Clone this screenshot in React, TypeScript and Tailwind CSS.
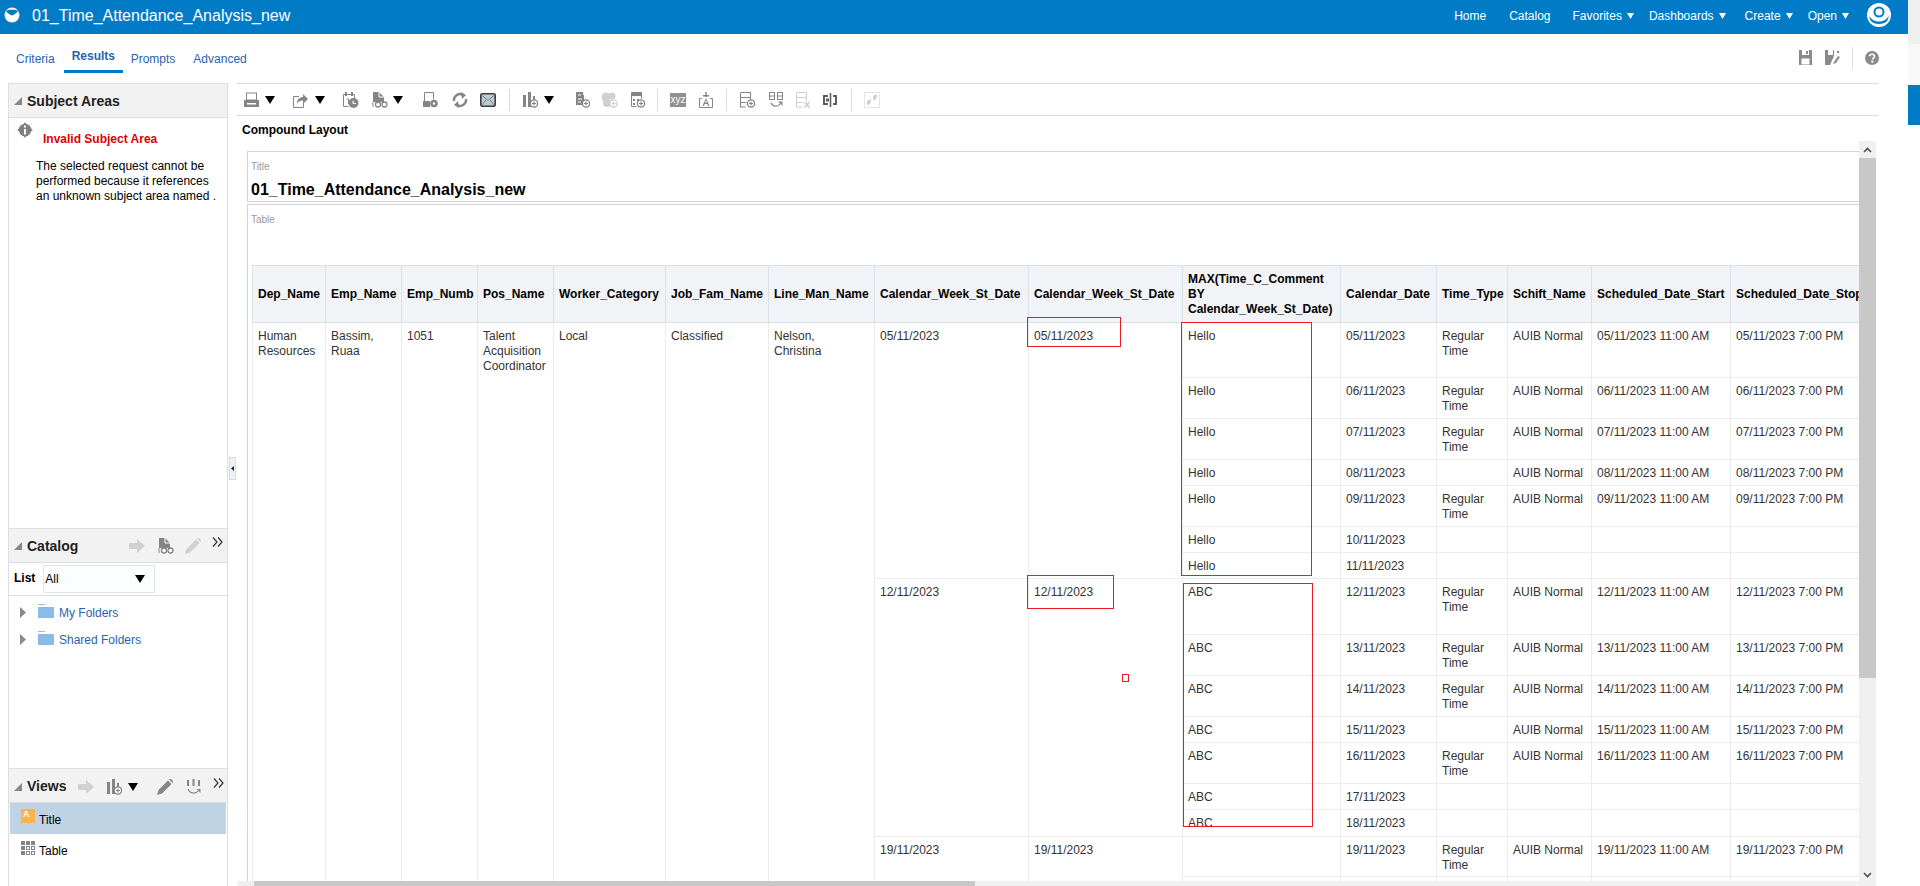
import type { ReactNode } from 'react';

const G = '#858585';
const L = '#d0d0d0';

function Ico({ children, w = 16, h = 16, className = '' }: { children: ReactNode; w?: number; h?: number; className?: string }) {
  return (
    <svg width={w} height={h} viewBox={`0 0 ${w} ${h}`} className={`shrink-0 ${className}`}>
      {children}
    </svg>
  );
}

function Caret({ className = '' }: { className?: string }) {
  return (
    <svg width="10" height="8" viewBox="0 0 10 8" className={`shrink-0 ${className}`}>
      <path d="M0 0h10L5 8z" fill="#000" />
    </svg>
  );
}

function NavCaret() {
  return (
    <svg width="7" height="6" viewBox="0 0 7 6" className="ml-[5px] shrink-0">
      <path d="M0 0h7L3.5 6z" fill="#fff" />
    </svg>
  );
}

function Plus({ x, y, c = G }: { x: number; y: number; c?: string }) {
  return (
    <g>
      <circle cx={x} cy={y} r="3.6" fill="#fff" stroke={c} strokeWidth="1.3" />
      <path d={`M${x - 2} ${y}h4M${x} ${y - 2}v4`} stroke={c} strokeWidth="1.2" />
    </g>
  );
}

function PrintIcon() {
  return (
    <Ico w={17}>
      <rect x="3.5" y="1" width="10" height="7" fill="none" stroke={G} />
      <path d="M1 8h15a1 1 0 0 1 0 1v6H1z" fill={G} />
      <rect x="4" y="11" width="9" height="1.5" fill="#fff" />
    </Ico>
  );
}

function ShareIcon() {
  return (
    <Ico>
      <path d="M7 4.5H1.5v11h10V11" fill="none" stroke={G} />
      <path d="M5 12c0-5 3-7 6-7V2l5 5-5 5V8.500c-3 0-5 1-6 3.500z" fill={G} />
    </Ico>
  );
}

function CalendarIcon() {
  return (
    <Ico w={17}>
      <path d="M1.500 2.500h11v8M1.500 2.500v12h5" fill="none" stroke={G} />
      <path d="M3 0h2v4H3zM9 0h2v4H9z" fill={G} />
      <path d="M4.500 7h2v5" fill="none" stroke={G} />
      <circle cx="11.500" cy="11" r="5" fill={G} />
      <path d="M11 8.500V11.500H14" fill="none" stroke="#fff" />
    </Ico>
  );
}

function DocGlassesIcon() {
  return (
    <Ico>
      <path d="M1 0h6l5 5v5H1z" fill={G} />
      <path d="M7 0v5h5" fill="none" stroke="#fff" />
      <path d="M1 10v5" stroke={G} />
      <circle cx="6" cy="12.500" r="2.500" fill="#fff" stroke={G} strokeWidth="1.300" />
      <circle cx="12.500" cy="12.500" r="2.500" fill="#fff" stroke={G} strokeWidth="1.300" />
    </Ico>
  );
}

function DocGearIcon() {
  return (
    <Ico w={15}>
      <path d="M1.500 9V.5h9v7" fill="none" stroke={G} />
      <path d="M0 9h7v6H0z" fill={G} />
      <circle cx="11" cy="11.500" r="3.800" fill={G} />
      <circle cx="11" cy="11.500" r="1.300" fill="#fff" />
    </Ico>
  );
}

function RefreshIcon() {
  return (
    <Ico>
      <path d="M2 9a6 6 0 0 1 9-6" fill="none" stroke={G} strokeWidth="2.400" />
      <path d="M14 7a6 6 0 0 1-9 6" fill="none" stroke={G} strokeWidth="2.400" />
      <path d="M9 0l5 3-4 4zM7 16l-5-3 4-4z" fill={G} />
    </Ico>
  );
}

function MailIcon() {
  return (
    <Ico>
      <rect x=".8" y="1.800" width="14.400" height="12.400" rx="1.500" fill="#bfcbd6" stroke="#3c3c3c" strokeWidth="1.600" />
      <path d="M2 3.500l6 5 6-5M2 13l4-5M14 13l-4-5" fill="none" stroke="#71828f" />
    </Ico>
  );
}

function BarsPlusIcon({ c = G }: { c?: string }) {
  return (
    <Ico>
      <path d="M1 3h3v12H1zM6 0h3v15H6zM11 4h2v4h-2z" fill={c} />
      <Plus x={12} y={11.500} c={c} />
    </Ico>
  );
}

function ListPlusIcon() {
  return (
    <Ico w={15}>
      <path d="M1 0h7v3h1v10H1z" fill={G} />
      <path d="M3 3h3M3 7h4M3 10h3" stroke="#fff" />
      <Plus x={11} y={11.500} />
    </Ico>
  );
}

function BlobPlusIcon() {
  return (
    <Ico w={17}>
      <circle cx="5" cy="5" r="4.500" fill={L} />
      <circle cx="11" cy="4" r="3.500" fill={L} />
      <circle cx="6" cy="11" r="4" fill={L} />
      <Plus x={12.500} y={11.500} c={L} />
    </Ico>
  );
}

function CalcPlusIcon() {
  return (
    <Ico w={15}>
      <path d="M1.500.5h10v6M1.500.5v14h5" fill="none" stroke={G} />
      <path d="M1 1h11v3H1z" fill={G} />
      <path d="M3 7h2v2H3zM7 7h2v2H7zM3 11h2v2H3z" fill={G} />
      <Plus x={11} y={11.500} />
    </Ico>
  );
}

function XyzIcon() {
  return (
    <div className="shrink-0 w-4 h-[14px] bg-[#909090] flex items-center justify-center text-white text-[10px] leading-none font-['Liberation_Sans',sans-serif]">
      xyz
    </div>
  );
}

function TextAddIcon() {
  return (
    <Ico>
      <path d="M4 6.500H1.500v9h13v-9H12" fill="none" stroke={G} />
      <path d="M8 0v5" stroke={G} strokeWidth="1.500" />
      <path d="M5 3h6v1.500H5z" fill={G} />
      <path d="M8 6l3.500 8H10l-.6-2H6.600L6 14H4.500zM7 10.500h2L8 8z" fill={G} fillRule="evenodd" />
    </Ico>
  );
}

function SectionPlusIcon() {
  return (
    <Ico>
      <path d="M1.500 1v14M1.500.5h10v5h-10M1.500 5.500v5h6M1.500 10.500v4.500h5" fill="none" stroke={G} strokeWidth="1.100" />
      <path d="M11.500 5.500v2" stroke={G} />
      <Plus x={12} y={11.500} />
    </Ico>
  );
}

function SectionSwapIcon() {
  return (
    <Ico>
      <rect x="1.500" y=".5" width="5" height="7" fill="none" stroke={G} />
      <rect x="9.500" y=".5" width="5" height="7" fill="none" stroke={G} />
      <path d="M1.500 4h5M9.500 4h5" stroke={G} />
      <path d="M3 11c2 4 7 4 9 1" fill="none" stroke={G} strokeWidth="1.300" />
      <path d="M10 9.500h4.500V14z" fill={G} />
    </Ico>
  );
}

function SectionDelIcon() {
  return (
    <Ico>
      <path d="M1.500 15V.5h10v9M1.500 5.500h10M1.500 10.500h6M1.500 15h6" fill="none" stroke={L} />
      <path d="M9.500 10l5 5.500M14.500 10l-5 5.500" stroke={L} strokeWidth="1.800" />
    </Ico>
  );
}

function ColumnSplitIcon() {
  return (
    <Ico>
      <path d="M1 3h5v2H3v6h3v2H1zM11 3h4v10h-4v-2h2V5h-2z" fill="#5f5f5f" />
      <path d="M4 6.500h3v3H4z" fill="#5f5f5f" />
      <path d="M8.500 1v14" stroke="#5f5f5f" strokeWidth="1.600" />
    </Ico>
  );
}

function StepsIcon() {
  return (
    <Ico>
      <rect x=".5" y=".5" width="15" height="15" fill="none" stroke="#e4e4e4" />
      <path d="M9 5c1-3 4-3 4-1s-2 3-2 4-2.500.5-2-3zM3 10c1-3 4-3 4-1s-2 3-2 4-2.500.5-2-3z" fill={L} />
    </Ico>
  );
}

function ArrowRightIcon({ c = L }: { c?: string }) {
  return (
    <Ico>
      <path d="M0 5h8V1l8 7-8 7v-4H0z" fill={c} />
    </Ico>
  );
}

function PencilIcon({ c = L }: { c?: string }) {
  return (
    <Ico>
      <path d="M0 16l1.500-5L11 1.500 14.500 5 5 14.500zM12 .5c1-1 2-.5 3 .5s1.500 2 .5 3z" fill={c} />
    </Ico>
  );
}

function DoubleChevron() {
  return (
    <svg width="11" height="10" viewBox="0 0 11 10" className="shrink-0">
      <path d="M1 .5L5 5 1 9.500M6 .5L10 5 6 9.500" fill="none" stroke="#333" strokeWidth="1.200" />
    </svg>
  );
}

function PanelCaret() {
  return (
    <svg width="8" height="8" viewBox="0 0 8 8" className="shrink-0">
      <path d="M8 0v8H0z" fill="#888" />
    </svg>
  );
}

function FolderRow({ label }: { label: string }) {
  return (
    <div className="flex items-center h-[27px]">
      <svg width="6" height="11" viewBox="0 0 6 11" className="ml-[11px] shrink-0">
        <path d="M0 0l6 5.500L0 11z" fill="#8a8a8a" />
      </svg>
      <svg width="16" height="14" viewBox="0 0 16 14" className="ml-3 shrink-0 -mt-[3px]">
        <path d="M0 0h7v1H0zM0 3h16v11H0z" fill="#8bbce8" />
      </svg>
      <span className="ml-[5px] text-[#2a63ac]">{label}</span>
    </div>
  );
}

const head = [
  'Dep_Name',
  'Emp_Name',
  'Emp_Numb',
  'Pos_Name',
  'Worker_Category',
  'Job_Fam_Name',
  'Line_Man_Name',
  'Calendar_Week_St_Date',
  'Calendar_Week_St_Date',
  'MAX(Time_C_Comment BY Calendar_Week_St_Date)',
  'Calendar_Date',
  'Time_Type',
  'Schift_Name',
  'Scheduled_Date_Start',
  'Scheduled_Date_Stop',
];

type Row = { h: string; week?: string; span?: number; comment: string; date: string; type: boolean; shift: boolean };

const rows: Row[] = [
  { h: 'h-[55px]', week: '05/11/2023', span: 7, comment: 'Hello', date: '05/11/2023', type: true, shift: true },
  { h: 'h-[41px]', comment: 'Hello', date: '06/11/2023', type: true, shift: true },
  { h: 'h-[41px]', comment: 'Hello', date: '07/11/2023', type: true, shift: true },
  { h: 'h-[26px]', comment: 'Hello', date: '08/11/2023', type: false, shift: true },
  { h: 'h-[41px]', comment: 'Hello', date: '09/11/2023', type: true, shift: true },
  { h: 'h-[26px]', comment: 'Hello', date: '10/11/2023', type: false, shift: false },
  { h: 'h-[26px]', comment: 'Hello', date: '11/11/2023', type: false, shift: false },
  { h: 'h-[56px]', week: '12/11/2023', span: 7, comment: 'ABC', date: '12/11/2023', type: true, shift: true },
  { h: 'h-[41px]', comment: 'ABC', date: '13/11/2023', type: true, shift: true },
  { h: 'h-[41px]', comment: 'ABC', date: '14/11/2023', type: true, shift: true },
  { h: 'h-[26px]', comment: 'ABC', date: '15/11/2023', type: false, shift: true },
  { h: 'h-[41px]', comment: 'ABC', date: '16/11/2023', type: true, shift: true },
  { h: 'h-[26px]', comment: 'ABC', date: '17/11/2023', type: false, shift: false },
  { h: 'h-[27px]', comment: 'ABC', date: '18/11/2023', type: false, shift: false },
  { h: 'h-[40px]', week: '19/11/2023', span: 2, comment: '', date: '19/11/2023', type: true, shift: true },
  { h: 'h-[41px]', comment: '', date: '20/11/2023', type: true, shift: true },
];

const td = 'border border-[#ececec] align-top px-[5px] pt-[6px] pb-[3px] text-[#333] leading-[15px]';
const th = 'border border-[#d9e1e7] bg-[#f1f3f7] px-[5px] font-bold text-black text-left leading-[15px]';

function ReportTable() {
  return (
    <table className="table-fixed border-collapse w-[1665px] text-[12px]">
      <colgroup>
        <col className="w-[73px]" />
        <col className="w-[76px]" />
        <col className="w-[76px]" />
        <col className="w-[76px]" />
        <col className="w-[112px]" />
        <col className="w-[103px]" />
        <col className="w-[106px]" />
        <col className="w-[154px]" />
        <col className="w-[154px]" />
        <col className="w-[158px]" />
        <col className="w-[96px]" />
        <col className="w-[71px]" />
        <col className="w-[84px]" />
        <col className="w-[139px]" />
        <col className="w-[187px]" />
      </colgroup>
      <thead>
        <tr className="h-[57px]">
          {head.map((h, i) => (
            <th key={i} className={th}>
              {h}
            </th>
          ))}
        </tr>
      </thead>
      <tbody>
        {rows.map((r, i) => (
          <tr key={r.date} className={r.h}>
            {i === 0 && (
              <>
                <td rowSpan={rows.length} className={td}>Human Resources</td>
                <td rowSpan={rows.length} className={td}>Bassim, Ruaa</td>
                <td rowSpan={rows.length} className={td}>1051</td>
                <td rowSpan={rows.length} className={td}>Talent Acquisition Coordinator</td>
                <td rowSpan={rows.length} className={td}>Local</td>
                <td rowSpan={rows.length} className={td}>Classified</td>
                <td rowSpan={rows.length} className={td}>Nelson,<br />Christina</td>
              </>
            )}
            {r.week && (
              <>
                <td rowSpan={r.span} className={td}>{r.week}</td>
                <td rowSpan={r.span} className={td}>{r.week}</td>
              </>
            )}
            <td className={td}>{r.comment}</td>
            <td className={td}>{r.date}</td>
            <td className={td}>{r.type ? 'Regular Time' : ''}</td>
            <td className={td}>{r.shift ? 'AUIB Normal' : ''}</td>
            <td className={td}>{r.shift ? `${r.date} 11:00 AM` : ''}</td>
            <td className={td}>{r.shift ? `${r.date} 7:00 PM` : ''}</td>
          </tr>
        ))}
      </tbody>
    </table>
  );
}

export default function App() {
  return (
    <div className="flex w-[1920px] h-[886px] overflow-hidden bg-white text-[12px] text-black font-['Liberation_Sans',Arial,sans-serif]">
      <div className="w-[1908px] flex flex-col">
        <header className="h-[34px] shrink-0 bg-[#027bc7] flex items-center text-white">
          <svg width="16" height="18" viewBox="0 0 16 18" className="ml-1 -mt-[4px] shrink-0">
            <circle cx="8" cy="9" r="7.500" fill="#fff" />
            <path d="M1.800 5c1.800 2.500 4 3.500 6.200 4.500 2.200-1 4.400-2 6.200-4.500-1.500-1-3-1.300-6.200-1.300S3.300 4 1.800 5z" fill="#027bc7" />
          </svg>
          <span className="ml-3 text-[16px] leading-none -mt-[3px]">01_Time_Attendance_Analysis_new</span>
          <nav className="ml-auto flex items-center pr-[17px] -mt-[3px]">
            <span>Home</span>
            <span className="ml-[23px]">Catalog</span>
            <span className="ml-[22px]">Favorites</span>
            <NavCaret />
            <span className="ml-[15px]">Dashboards</span>
            <NavCaret />
            <span className="ml-[19px]">Create</span>
            <NavCaret />
            <span className="ml-[15px]">Open</span>
            <NavCaret />
            <svg width="24" height="24" viewBox="0 0 24 24" className="ml-[18px] shrink-0 -mt-[2px]">
              <circle cx="12" cy="12" r="12" fill="#fff" />
              <circle cx="12" cy="9" r="4.500" fill="none" stroke="#027bc7" strokeWidth="2" />
              <path d="M2.500 13c2 4 5.500 5.500 9.500 5.500s7.500-1.500 9.500-5.500c.5 5-4 8-9.500 8s-10-3-9.500-8z" fill="#027bc7" />
            </svg>
          </nav>
        </header>

        <div className="h-[49px] shrink-0 flex text-[#2a63ac]">
          <div className="flex pl-4">
            <span className="mt-[18px] leading-[15px]">Criteria</span>
            <span className="ml-[9px] px-2 w-[59px] h-[39px] border-b-[3px] border-[#027bc7] font-bold text-[#2a63ac] pt-[15px] leading-[15px] text-[12px] whitespace-nowrap">Results</span>
            <span className="ml-2 mt-[18px] leading-[15px]">Prompts</span>
            <span className="ml-[18px] mt-[18px] leading-[15px]">Advanced</span>
          </div>
          <div className="ml-auto flex items-center mr-[29px] mt-[-2px]">
            <Ico w={13} h={15}>
              <path d="M0 0h3v5h7V0h3v15H0z" fill="#8a8a8a" />
              <path d="M7 1h2v3H7zM3 9h7v6H3z" fill="#8a8a8a" />
              <path d="M2.500 8.500h8v6h-8z" fill="#fff" />
            </Ico>
            <Ico w={15} h={15} className="ml-[13px]">
              <path d="M0 0h3v5h5V0h1v6l-4 9H0z" fill="#8a8a8a" />
              <path d="M12 1h2v2h-2zM9 12l4-6 2 1-4 6-3 1z" fill="#8a8a8a" />
            </Ico>
            <div className="ml-3 w-px h-[22px] bg-[#dcdcdc]" />
            <svg width="14" height="14" viewBox="0 0 14 14" className="ml-3 shrink-0">
              <circle cx="7" cy="7" r="7" fill="#8a8a8a" />
              <path d="M4.500 5.200C4.700 2.500 9.500 2.500 9.500 5.200c0 1.800-2 1.800-2 3.300" fill="none" stroke="#fff" strokeWidth="1.600" />
              <rect x="6.400" y="9.600" width="2" height="2" fill="#fff" />
            </svg>
          </div>
        </div>

        <div className="flex-1 min-h-0 flex pl-2">
          <aside className="w-[220px] shrink-0 flex flex-col border-x border-t border-[#d9dfe3]">
            <section className="h-[444px] shrink-0">
              <div className="h-[34px] pt-px bg-[#f2f2f2] border-b border-[#d9dfe3] flex items-center pl-[5px]">
                <PanelCaret />
                <span className="ml-[5px] font-bold text-[14px] text-[#222]">Subject Areas</span>
              </div>
              <div className="flex pl-2">
                <svg width="16" height="16" viewBox="0 0 16 16" className="mt-[4px] shrink-0">
                  <circle cx="8" cy="8" r="6.300" fill="#7f7f7f" />
                  <path d="M8 0l1.500 2.500h-3zM8 16l-1.500-2.500h3zM0 8l2.500-1.500v3zM16 8l-2.500 1.500v-3z" fill="#7f7f7f" />
                  <rect x="7" y="3.500" width="2" height="2" fill="#fff" />
                  <rect x="7" y="7" width="2" height="5.500" fill="#fff" />
                </svg>
                <span className="ml-[10px] mt-[14px] font-bold text-[#e00000] leading-[15px]">Invalid Subject Area</span>
              </div>
              <p className="ml-[27px] mt-[12px] leading-[15px] w-[187px]">
                The selected request cannot be performed because it references an unknown subject area named .
              </p>
            </section>
            <section className="h-[240px] shrink-0 border-t border-[#d9dfe3]">
              <div className="h-[34px] pt-px bg-[#f2f2f2] border-b border-[#d9dfe3] flex items-center pl-[5px]">
                <PanelCaret />
                <span className="ml-[5px] font-bold text-[14px] text-[#222]">Catalog</span>
                <span className="ml-[51px]"><ArrowRightIcon /></span>
                <span className="ml-[13px]"><DocGlassesIcon /></span>
                <span className="ml-[11px]"><PencilIcon /></span>
                <span className="ml-[11px] -mt-2"><DoubleChevron /></span>
              </div>
              <div className="h-[33px] flex items-center border-b border-[#d9dfe3] pl-[5px]">
                <span className="font-bold -mt-[3px]">List</span>
                <div className="ml-2 w-[112px] h-[28px] border border-[#dfe5ea] bg-[#fbfdff] flex items-center px-px">
                  <span>All</span>
                  <Caret className="ml-auto mr-[8px]" />
                </div>
              </div>
              <div className="pt-[3px]">
                <FolderRow label="My Folders" />
                <FolderRow label="Shared Folders" />
              </div>
            </section>
            <section className="flex-1 border-t border-[#d9dfe3]">
              <div className="h-[34px] pt-[2px] bg-[#f2f2f2] border-b border-[#d9dfe3] flex items-center pl-[5px]">
                <PanelCaret />
                <span className="ml-[5px] font-bold text-[14px] text-[#222]">Views</span>
                <span className="ml-[12px]"><ArrowRightIcon /></span>
                <span className="ml-[12px]"><BarsPlusIcon /></span>
                <Caret className="ml-[6px]" />
                <span className="ml-[19px]"><PencilIcon c={G} /></span>
                <span className="ml-[13px]">
                  <Ico w={15}>
                    <path d="M1 1h2v6H1zM6.500 0h2v7h-2zM12 1h2v6h-2z" fill={G} />
                    <path d="M2 10c2 5 8 5 10 2" fill="none" stroke={G} strokeWidth="1.200" />
                    <path d="M10.500 10h4v4z" fill={G} />
                  </Ico>
                </span>
                <span className="ml-[12px] -mt-2"><DoubleChevron /></span>
              </div>
              <div className="mx-px h-[31px] bg-[#bfd3e4] flex items-center pl-[11px]">
                <div className="w-[14px] h-[14px] bg-[#fdb34d] text-white text-[9px] font-bold leading-[11px] pl-[2px] -mt-[6px]">A</div>
                <span className="ml-1 mt-[2px]">Title</span>
              </div>
              <div className="mx-px h-[31px] pt-[2px] flex items-center pl-[11px]">
                <div className="grid grid-cols-3 gap-px w-[14px] -mt-[6px]">
                  <span className="h-[4px] bg-[#858585]" />
                  <span className="h-[4px] bg-[#858585]" />
                  <span className="h-[4px] bg-[#858585]" />
                  <span className="h-[4px] bg-[#858585]" />
                  <span className="h-[4px] border border-[#858585]" />
                  <span className="h-[4px] border border-[#858585]" />
                  <span className="h-[4px] bg-[#858585]" />
                  <span className="h-[4px] border border-[#858585]" />
                  <span className="h-[4px] border border-[#858585]" />
                </div>
                <span className="ml-1">Table</span>
              </div>
            </section>
          </aside>

          <div className="w-[9px] shrink-0 flex items-center">
            <div className="w-[7px] h-[23px] mt-[-32px] ml-px bg-[#eef2f6] border border-[#d5dce2] flex items-center justify-center">
              <svg width="3" height="5" viewBox="0 0 3 5">
                <path d="M3 0v5L0 2.500z" fill="#222" />
              </svg>
            </div>
          </div>

          <main className="flex-1 min-w-0 flex flex-col">
            <div className="w-[1641px] h-[33px] shrink-0 border-y border-[#dcdcdc] flex items-center pl-[6px]">
              <PrintIcon />
              <Caret className="ml-[5px]" />
              <span className="ml-[17px]"><ShareIcon /></span>
              <Caret className="ml-[7px]" />
              <span className="ml-[17px]"><CalendarIcon /></span>
              <span className="ml-[13px]"><DocGlassesIcon /></span>
              <Caret className="ml-[5px]" />
              <span className="ml-[20px]"><DocGearIcon /></span>
              <span className="ml-[14px]"><RefreshIcon /></span>
              <span className="ml-[12px]"><MailIcon /></span>
              <div className="ml-[13px] w-px h-[22px] bg-[#dcdcdc]" />
              <span className="ml-[12px]"><BarsPlusIcon /></span>
              <Caret className="ml-[6px]" />
              <span className="ml-[21px]"><ListPlusIcon /></span>
              <span className="ml-[11px]"><BlobPlusIcon /></span>
              <span className="ml-[12px]"><CalcPlusIcon /></span>
              <div className="ml-[12px] w-px h-[22px] bg-[#dcdcdc]" />
              <span className="ml-[12px]"><XyzIcon /></span>
              <span className="ml-[12px]"><TextAddIcon /></span>
              <div className="ml-[12px] w-px h-[22px] bg-[#dcdcdc]" />
              <span className="ml-[12px]"><SectionPlusIcon /></span>
              <span className="ml-[13px]"><SectionSwapIcon /></span>
              <span className="ml-[11px]"><SectionDelIcon /></span>
              <span className="ml-[11px]"><ColumnSplitIcon /></span>
              <div className="ml-[13px] w-px h-[22px] bg-[#dcdcdc]" />
              <span className="ml-[12px]"><StepsIcon /></span>
            </div>
            <div className="h-[25px] shrink-0 pl-[5px] pt-[7px] font-bold leading-[15px]">Compound Layout</div>

            <div className="flex-1 min-h-0 flex">
              <div className="w-[1622px] flex flex-col">
                <div className="relative flex-1 min-h-0 overflow-hidden pl-[10px] pt-[10px]">
                  <div className="w-[1700px] h-[51px] border border-r-0 border-[#d4d4d4] pl-[3px]">
                    <div className="text-[10px] text-[#9a9a9a] leading-[12px] mt-[9px]">Title</div>
                    <div className="text-[16px] font-bold leading-[18px] mt-[8px]">01_Time_Attendance_Analysis_new</div>
                  </div>
                  <div className="w-[1700px] mt-[2px] border border-r-0 border-[#d4d4d4] pl-[4px] pt-[9px]">
                    <div className="text-[10px] text-[#9a9a9a] leading-[12px] -ml-px">Table</div>
                    <div className="mt-[39px]">
                      <ReportTable />
                    </div>
                  </div>
                  <div className="absolute left-[790px] top-[176px] w-[94px] h-[30px] border border-[#ed1c24]" />
                  <div className="absolute left-[944px] top-[181px] w-[131px] h-[254px] border border-[#ed1c24]" />
                  <div className="absolute left-[790px] top-[434px] w-[87px] h-[34px] border border-[#ed1c24]" />
                  <div className="absolute left-[946px] top-[442px] w-[130px] h-[244px] border border-[#ed1c24]" />
                  <div className="absolute left-[885px] top-[533px] w-[7px] h-[8px] border border-[#ed1c24]" />
                </div>
                <div className="h-[5px] shrink-0 flex bg-[#f0f0f0]">
                  <div className="ml-[17px] w-[721px] bg-[#c8c8c8]" />
                </div>
              </div>
              <div className="w-[17px] shrink-0 bg-[#f0f0f0] flex flex-col">
                <div className="h-[17px] flex items-center justify-center">
                  <svg width="9" height="6" viewBox="0 0 9 6">
                    <path d="M1 5l3.500-3.500L8 5" fill="none" stroke="#505050" strokeWidth="1.600" />
                  </svg>
                </div>
                <div className="h-[520px] bg-[#c8c8c8]" />
                <div className="mt-auto h-[22px] flex items-center justify-center">
                  <svg width="9" height="6" viewBox="0 0 9 6">
                    <path d="M1 1l3.500 3.500L8 1" fill="none" stroke="#505050" strokeWidth="1.600" />
                  </svg>
                </div>
              </div>
            </div>
          </main>
        </div>
      </div>

      <div className="w-3 shrink-0 flex flex-col">
        <div className="h-[44px] bg-[#efefef]" />
        <div className="h-[41px] bg-[#f8f8f8]" />
        <div className="h-[40px] bg-[#027bc7]" />
      </div>
    </div>
  );
}
